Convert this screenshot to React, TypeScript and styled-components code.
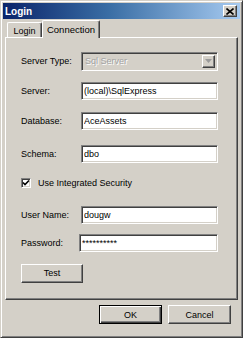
import styled, { createGlobalStyle } from "styled-components";

const GlobalStyle = createGlobalStyle`
  html, body {
    margin: 0;
    padding: 0;
    background: #ffffff;
  }
  body {
    font-family: "Liberation Sans", Arial, sans-serif;
    font-size: 9px;
    color: #000;
  }
`;

export default function App() {
  return (
    <>
      <GlobalStyle />
      <Window>
        <TitleBar>
          <Title>Login</Title>
          <CloseButton>
            <svg width="8" height="7" viewBox="0 0 8 7">
              <path d="M0.5 0.5 L7.5 6.5 M7.5 0.5 L0.5 6.5" stroke="#000" strokeWidth="1.6" />
            </svg>
          </CloseButton>
        </TitleBar>

        <TabStrip>
          <Tab $w={35}>Login</Tab>
          <Tab $w={58} $active>
            Connection
          </Tab>
        </TabStrip>

        <Panel>
          <Row>
            <Label>Server Type:</Label>
            <Combo>
              <ComboText>Sql Server</ComboText>
              <ComboArrow>
                <svg width="7" height="4" viewBox="0 0 7 4">
                  <path d="M0 0 H7 L3.5 4 Z" fill="#9a9a9a" />
                </svg>
              </ComboArrow>
            </Combo>
          </Row>

          <Row $mt={12}>
            <Label>Server:</Label>
            <TextBox readOnly value="(local)\SqlExpress" />
          </Row>

          <Row $mt={12}>
            <Label>Database:</Label>
            <TextBox readOnly value="AceAssets" />
          </Row>

          <Row $mt={15}>
            <Label>Schema:</Label>
            <TextBox readOnly value="dbo" />
          </Row>

          <Row $mt={11}>
            <CheckBox>
              <svg width="8" height="8" viewBox="0 0 8 8">
                <path d="M1 3.5 L3 5.5 L7 1.5" stroke="#000" strokeWidth="1.6" fill="none" />
              </svg>
            </CheckBox>
            <CheckLabel>Use Integrated Security</CheckLabel>
          </Row>

          <Row $mt={14}>
            <Label>User Name:</Label>
            <TextBox readOnly value="dougw" />
          </Row>

          <Row $mt={10}>
            <Label>Password:</Label>
            <TextBox readOnly value="**********" $shift={-2} $w={139} />
          </Row>

          <Row $mt={12}>
            <Button $w={62}>Test</Button>
          </Row>
        </Panel>

        <Footer>
          <Button $w={63} $default>
            OK
          </Button>
          <Button $w={63}>Cancel</Button>
        </Footer>
      </Window>
    </>
  );
}

const Window = styled.div`
  width: 243px;
  height: 338px;
  box-sizing: border-box;
  display: flex;
  flex-direction: column;
  padding: 2px;
  background: #d4d0c8;
  border: 1px solid;
  border-color: #d4d0c8 #404040 #404040 #d4d0c8;
  box-shadow: inset 1px 1px #ffffff, inset -1px -1px #808080;
`;

const TitleBar = styled.div`
  height: 16px;
  flex-shrink: 0;
  display: flex;
  align-items: center;
  justify-content: space-between;
  padding: 0 3px 0 2px;
  background: linear-gradient(to right, #0a246a 0%, #3a6ea5 45%, #a6caf0 100%);
`;

const Title = styled.div`
  color: #ffffff;
  font-weight: bold;
  font-size: 10px;
`;

const CloseButton = styled.div`
  width: 14px;
  height: 12px;
  box-sizing: border-box;
  display: flex;
  align-items: center;
  justify-content: center;
  background: #d4d0c8;
  border: 1px solid;
  border-color: #ffffff #404040 #404040 #ffffff;
  box-shadow: inset -1px -1px #808080;
`;

const TabStrip = styled.div`
  height: 17px;
  flex-shrink: 0;
  margin-top: 1px;
  display: flex;
  align-items: flex-end;
  padding-left: 4px;
  position: relative;
  z-index: 1;
`;

const Tab = styled.div<{ $active?: boolean; $w: number }>`
  width: ${(p) => p.$w}px;
  height: ${(p) => (p.$active ? 18 : 15)}px;
  margin-bottom: ${(p) => (p.$active ? -1 : 0)}px;
  box-sizing: border-box;
  display: flex;
  align-items: center;
  justify-content: center;
  padding-top: ${(p) => (p.$active ? 0 : 2)}px;
  background: #d4d0c8;
  border-top: 1px solid #ffffff;
  border-left: 1px solid #ffffff;
  border-right: 1px solid #404040;
  box-shadow: inset -1px 0 #808080;
  border-radius: 2px 2px 0 0;
  font-size: ${(p) => (p.$active ? 9.5 : 9)}px;
`;

const Panel = styled.div`
  height: 263px;
  flex-shrink: 0;
  margin: 0 2px;
  box-sizing: border-box;
  padding: 14px 0 0 15px;
  display: flex;
  flex-direction: column;
  border: 1px solid;
  border-color: #ffffff #404040 #404040 #ffffff;
  box-shadow: inset -1px -1px #808080;
`;

const Row = styled.div<{ $mt?: number }>`
  height: 18px;
  margin-top: ${(p) => p.$mt ?? 0}px;
  display: flex;
  align-items: center;
`;

const Label = styled.div`
  width: 60px;
  flex-shrink: 0;
`;

const sunken = `
  border: 1px solid;
  border-color: #808080 #ffffff #ffffff #808080;
  box-shadow: inset 1px 1px #404040, inset -1px -1px #d4d0c8;
`;

const TextBox = styled.input<{ $shift?: number; $w?: number }>`
  width: ${(p) => p.$w ?? 137}px;
  height: 18px;
  margin-left: ${(p) => p.$shift ?? 0}px;
  box-sizing: border-box;
  padding: 0 0 0 2px;
  background: #ffffff;
  font-family: "Liberation Sans", Arial, sans-serif;
  font-size: 9px;
  color: #000;
  outline: none;
  ${sunken}
`;

const Combo = styled.div`
  width: 137px;
  height: 19px;
  box-sizing: border-box;
  display: flex;
  align-items: center;
  justify-content: space-between;
  padding: 0 2px 0 3px;
  background: #d4d0c8;
  ${sunken}
`;

const ComboText = styled.div`
  color: #a3a3a3;
  text-shadow: 1px 1px #ffffff;
`;

const ComboArrow = styled.div`
  width: 13px;
  height: 13px;
  box-sizing: border-box;
  display: flex;
  align-items: center;
  justify-content: center;
  background: #d4d0c8;
  border: 1px solid;
  border-color: #ffffff #404040 #404040 #ffffff;
  box-shadow: inset -1px -1px #808080;
`;

const CheckBox = styled.div`
  width: 10px;
  height: 10px;
  box-sizing: border-box;
  display: flex;
  align-items: center;
  justify-content: center;
  background: #ffffff;
  ${sunken}
`;

const CheckLabel = styled.div`
  margin-left: 7px;
`;

const Button = styled.div<{ $w: number; $default?: boolean }>`
  width: ${(p) => p.$w}px;
  height: 19px;
  box-sizing: border-box;
  display: flex;
  align-items: center;
  justify-content: center;
  background: #d4d0c8;
  border: 1px solid;
  border-color: ${(p) =>
    p.$default ? "#000000" : "#ffffff #404040 #404040 #ffffff"};
  box-shadow: ${(p) =>
    p.$default
      ? "inset 1px 1px #ffffff, inset -1px -1px #404040, inset -2px -2px #808080"
      : "inset -1px -1px #808080"};
`;

const Footer = styled.div`
  flex: 1;
  display: flex;
  justify-content: flex-end;
  align-items: flex-start;
  gap: 6px;
  padding: 5px 9px 0 0;
`;
